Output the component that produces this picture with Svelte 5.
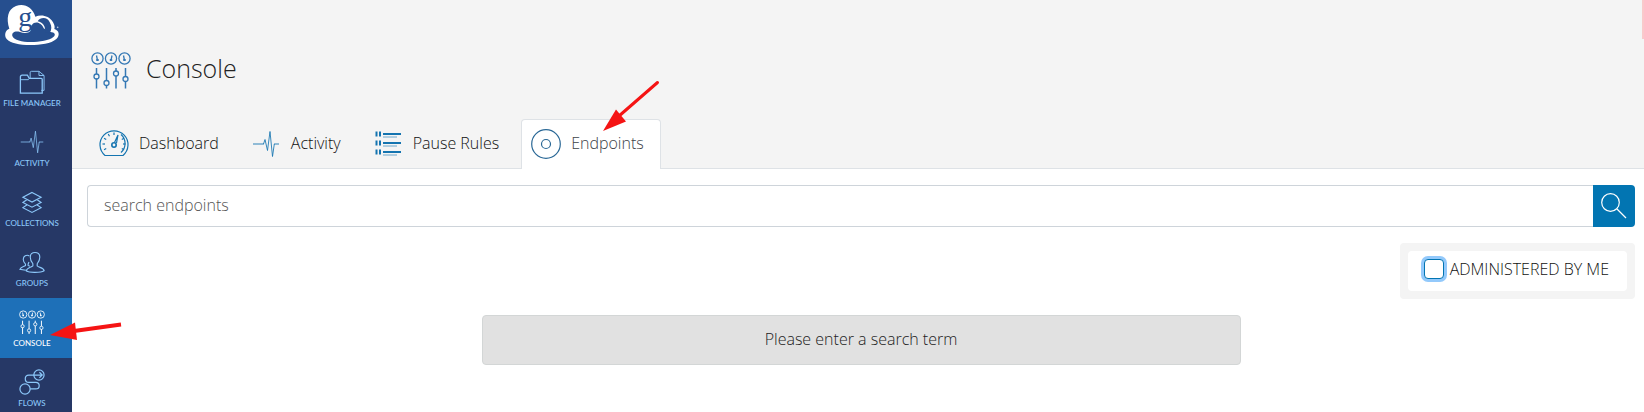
<script>
  const nav = [
    { id: 'files', label: 'FILE MANAGER' },
    { id: 'activity', label: 'ACTIVITY' },
    { id: 'collections', label: 'COLLECTIONS' },
    { id: 'groups', label: 'GROUPS' },
    { id: 'console', label: 'CONSOLE' },
    { id: 'flows', label: 'FLOWS' }
  ];
  const tabs = [
    { id: 'dashboard', label: 'Dashboard' },
    { id: 'pulse', label: 'Activity' },
    { id: 'rules', label: 'Pause Rules' },
    { id: 'endpoints', label: 'Endpoints' }
  ];
  const ticks = [150, 180, 210, 240, 270, 330, 0, 30];
  let term = $state('');
  let mine = $state(false);
</script>

{#snippet consoleIcon()}
  <svg viewBox="0 0 40 38" fill="none" stroke="currentColor" stroke-width="1.3" aria-hidden="true">
    <circle cx="6.500" cy="7.500" r="5.600" /><circle cx="20" cy="7.500" r="5.600" /><circle cx="33.500" cy="7.500" r="5.600" />
    <path d="M5.500 4.500l1 5M21 4.500l-1 5M32.500 4.500l1 5" stroke-width="1.300" />
    <path d="M5.300 9h2.400M18.800 9h2.400M32.300 9h2.400" stroke-width="2" />
    <path d="M5.500 17v6M5.500 27.500v10M15.500 17v12.500M15.500 34.500v3M25 17v3M25 25v12.500M34.500 17v8.500M34.500 30v7.500" stroke-width="1.500" />
    <circle cx="5.500" cy="25.500" r="2.500" /><circle cx="15.500" cy="32" r="2.500" /><circle cx="25" cy="22.500" r="2.500" /><circle cx="34.500" cy="28" r="2.500" />
  </svg>
{/snippet}

{#snippet pulseIcon()}
  <svg viewBox="0 0 30 30" fill="none" stroke="currentColor" aria-hidden="true">
    <path d="M2 15h11" stroke-width="1.500" opacity=".6" /><path d="M23 15h5" stroke-width="1.500" opacity=".6" />
    <path d="M12.500 15l1.500-4.500 2.500 11 2.500-19 2.500 25 1.800-12.500" stroke-width="1" opacity=".85" />
  </svg>
{/snippet}

<div class="app">
  <nav class="side" aria-label="Main">
    <a class="logo" href="#home" aria-label="Home">
      <svg viewBox="0 0 216 174" aria-hidden="true">
        <path fill="#fff" d="M28 86C18 56 23 27 48 18C72 9 98 21 106 50C123 43 147 46 159 67C164 76 165 82 163 87C178 91 180 107 169 117C154 131 121 135 91 135C58 135 31 130 20 117C12 107 15 91 28 86Z" />
        <path fill="#264f8f" d="M37 108C35 97 45 92 60 96C74 101 86 99 92 92C91 74 102 64 116 69C124 72 129 78 131 85L151 96C164 97 169 104 160 111C149 121 119 126 92 126C66 126 42 121 37 108Z" />
        <path fill="#264f8f" d="M113 64C121 51 142 50 150 68C156 79 155 89 149 100L136 96C137 80 128 66 113 64Z" />
        <text x="55" y="77" font-family="Liberation Serif, serif" font-size="84" fill="#264f8f">g</text>
        <circle cx="173" cy="82" r="2.500" fill="#b6c7df" />
      </svg>
    </a>
    {#each nav as item (item.id)}
      <a class="item" class:current={item.id === 'console'} href={'#' + item.id}>
        <span class="glyph">
          {#if item.id === 'files'}
            <svg viewBox="0 0 28 28" fill="none" stroke="currentColor" aria-hidden="true">
              <path d="M1.500 26V8.500q0-2 2-2h5.500l2 3.500h13q1 0 1 1v15z" stroke-width="1.400" />
              <path d="M1.500 11.500h8.500l1.500-1.500M12 10V4q0-1.500 1.500-1.500h8L27 7v16h-3M21.500 2.500V7H27" />
            </svg>
          {:else if item.id === 'activity'}
            {@render pulseIcon()}
          {:else if item.id === 'collections'}
            <svg viewBox="0 0 30 30" fill="none" stroke="currentColor" stroke-width="1.300" aria-hidden="true">
              <path d="M15 4l10.500 5.500L15 15 4.500 9.500zM9 12.500L4.500 15.500l10.500 5.500 10.500-5.500-4.500-3M9 18.500l-4.500 3 10.500 5.500 10.500-5.500-4.500-3" />
            </svg>
          {:else if item.id === 'groups'}
            <svg viewBox="0 0 30 26" fill="none" stroke="currentColor" stroke-width="1.300" aria-hidden="true">
              <path d="M16 15C14 12.500 13 11 13 7.500C13 4 15 2 18.500 2S24 4 24 7.500c0 3-1 5-3 7.500v2.500c2 2 7.500 2 8 5.500C25 25.500 12 25.500 8.500 23.500c0-4 5.500-4 7.500-6z" />
              <path d="M12 6C9 4 4.500 6 5 10.500c0 2 1 3.500 2.500 5v1.500c-2 1.500-5.500 1.500-6.500 4.500l7 1M11.500 13l-1 2.500V17l2 1" />
            </svg>
          {:else if item.id === 'console'}
            {@render consoleIcon()}
          {:else}
            <svg viewBox="0 0 28 28" fill="none" stroke="currentColor" stroke-width="1.300" aria-hidden="true">
              <circle cx="21.500" cy="6.500" r="5.500" /><circle cx="6.500" cy="21.500" r="5.500" />
              <path d="M12 21.500h6c5 0 5-7 0-7h-7.500c-5 0-5-8 0-8H25M22 3.500l3 3-3 3" />
            </svg>
          {/if}
        </span>
        <span>{item.label}</span>
      </a>
    {/each}
  </nav>

  <main>
    <header>
      <div class="title">
        {@render consoleIcon()}
        <h1>Console</h1>
      </div>
      <nav class="tabs" aria-label="Console sections">
        {#each tabs as tab (tab.id)}
          <a class="tab" class:active={tab.id === 'endpoints'} href={'#' + tab.id}>
            {#if tab.id === 'dashboard'}
              <svg viewBox="0 0 30 30" fill="none" stroke="currentColor" stroke-width="1.200" aria-hidden="true">
                <path d="M6 26.500A14 14 0 1 1 24 26.500z" />
                <path d="M22 5.500a12 12 0 0 1 0 18" />
                {#each ticks as angle}
                  <path d="M24 15h2.500" transform={`rotate(${angle} 15 15)`} />
                {/each}
                <circle cx="15" cy="16" r="2.200" stroke-width="1.600" /><path d="M15.500 13.500L19 6l-1.500 8" />
              </svg>
            {:else if tab.id === 'pulse'}
              {@render pulseIcon()}
            {:else if tab.id === 'rules'}
              <svg viewBox="0 0 30 30" fill="none" stroke="currentColor" aria-hidden="true">
                {#each [4, 13, 22] as y}
                  <path d={`M3.500 ${y - 1.5}v5M7 ${y - 1.5}v5`} stroke-width="2" />
                  <path d={`M10 ${y + 1}h18`} stroke-width="2" />
                  <path d={`M10 ${y + 4}h14`} stroke-width="1" opacity=".6" />
                {/each}
              </svg>
            {:else}
              <svg viewBox="0 0 30 30" fill="none" stroke="currentColor" stroke-width="1.200" aria-hidden="true">
                <circle cx="15" cy="15" r="14.300" /><circle cx="15" cy="15" r="4.500" />
              </svg>
            {/if}
            <span>{tab.label}</span>
          </a>
        {/each}
      </nav>
      <div class="edge"></div>
    </header>

    <div class="content">
      <form class="search" role="search" onsubmit={(e) => e.preventDefault()}>
        <input type="text" aria-label="search endpoints" placeholder="search endpoints" bind:value={term} />
        <button type="submit" aria-label="Search">
          <svg viewBox="0 0 26 26" fill="none" stroke="#fff" stroke-width="1.200" aria-hidden="true">
            <circle cx="9.500" cy="9.500" r="8.800" /><path d="M16 16l9 9" stroke-width="1.200" />
          </svg>
        </button>
      </form>
      <div class="filter">
        <label for="mine"><input id="mine" type="checkbox" bind:checked={mine} />ADMINISTERED BY ME</label>
      </div>
      <p class="message">Please enter a search term</p>
    </div>
  </main>

  <svg class="arrow to-tab" viewBox="0 0 58 52" aria-hidden="true">
    <path d="M55.500 2.500L17 36" stroke="#f51414" stroke-width="3" stroke-linecap="round" />
    <path d="M1 51L14 29.500 24 41.500z" fill="#f51414" />
  </svg>
  <svg class="arrow to-nav" viewBox="0 0 73 20" aria-hidden="true">
    <path d="M71 3.500L24 10" stroke="#f51414" stroke-width="4" />
    <path d="M0 14L25 1.500 27 19z" fill="#f51414" />
  </svg>
</div>

<style>
  :global(body) {
    margin: 0;
    background: #fff;
  }
  .app {
    position: relative;
    display: flex;
    height: 100vh;
    overflow: hidden;
    font: 300 16px/24px "Open Sans", sans-serif;
    color: #111;
  }
  .app :global(*) {
    box-sizing: border-box;
  }
  a {
    text-decoration: none;
    color: inherit;
  }
  svg {
    display: block;
    flex: none;
  }
  .side {
    flex: 0 0 72px;
    background: #263866;
  }
  .logo {
    display: block;
    height: 58px;
    background: #264f8f;
  }
  .logo svg {
    width: 72px;
    height: 58px;
    overflow: visible;
  }
  .item {
    display: flex;
    flex-direction: column;
    align-items: center;
    height: 60px;
    padding: 11px 8px 0 0;
    font-family: Lato, sans-serif;
    font-size: 8px;
    font-weight: 500;
    line-height: 10px;
    white-space: nowrap;
    color: #8cc8fa;
  }
  .glyph {
    display: flex;
    align-items: center;
    height: 26px;
    margin-bottom: 3px;
  }
  .glyph svg {
    width: 26px;
    height: 26px;
  }
  .current {
    background: #1e70b8;
    color: #fff;
  }
  main {
    flex: 1;
    min-width: 0;
  }
  header {
    position: relative;
    height: 169px;
    padding: 51px 17px 0;
    background: #f4f4f4;
    border-bottom: 1px solid #dee2e6;
  }
  .edge {
    position: absolute;
    top: 0;
    right: 0;
    width: 2px;
    height: 39px;
    background: #f9c9cb;
  }
  .title {
    display: flex;
    align-items: center;
    gap: 15px;
    height: 38px;
    padding-left: 2px;
    color: #3478b4;
  }
  .title svg {
    width: 40px;
    height: 38px;
  }
  h1 {
    margin: 0 0 4px;
    font-size: 25px;
    font-weight: 300;
    line-height: 34px;
    color: #222;
  }
  .tabs {
    display: flex;
    gap: 5px;
    margin-top: 30px;
  }
  .tab {
    display: flex;
    align-items: center;
    gap: 10px;
    height: 50px;
    padding: 0 16px 2px 9px;
    border: 1px solid transparent;
    border-bottom: 0;
    border-radius: 4px 4px 0 0;
    color: #1474b0;
  }
  .tab svg {
    width: 30px;
    height: 30px;
  }
  .tab span {
    margin-bottom: 2px;
    color: #111;
  }
  .tab.active {
    background: #fff;
    border-color: #dee2e6;
    color: #2a6896;
  }
  .tab.active span {
    color: #3c4248;
  }
  .content {
    display: flex;
    flex-direction: column;
    padding: 16px 9px 0 15px;
  }
  .search {
    display: flex;
    height: 42px;
  }
  .search input {
    flex: 1;
    min-width: 0;
    padding: 0 16px 2px;
    border: 1px solid #ced4da;
    border-right: 0;
    border-radius: 4px 0 0 4px;
    background: #fff;
    font: inherit;
    color: #222;
    outline: 0;
  }
  .search input::placeholder {
    color: #555;
    opacity: 1;
  }
  .search button {
    display: grid;
    place-items: center;
    width: 42px;
    padding: 0;
    border: 0;
    border-radius: 0 4px 4px 0;
    background: #0275b2;
  }
  .search button svg {
    width: 26px;
    height: 26px;
  }
  .filter {
    align-self: flex-end;
    margin-top: 16px;
    padding: 8px;
    border-radius: 4px;
    background: #f4f4f4;
  }
  .filter label {
    display: flex;
    align-items: center;
    gap: 6px;
    height: 40px;
    padding: 0 18px 4px 16px;
    border-radius: 4px;
    background: #fff;
  }
  .filter input {
    appearance: none;
    width: 20px;
    height: 20px;
    margin: 0;
    border: 1px solid #0275b2;
    border-radius: 4px;
    background: #fff;
    box-shadow: 0 0 0 3px #93c9fb;
  }
  .filter input:checked {
    background: #0275b2;
  }
  .message {
    align-self: center;
    width: calc(50% - 15px);
    margin: 16px 0 0;
    padding: 11px 16px 13px;
    border: 1px solid #d3d6d6;
    border-radius: 4px;
    background: #e1e1e1;
    text-align: center;
    color: #222;
  }
  .arrow {
    position: absolute;
    pointer-events: none;
  }
  .to-tab {
    left: 602px;
    top: 80px;
    width: 58px;
    height: 52px;
  }
  .to-nav {
    left: 50px;
    top: 321px;
    width: 73px;
    height: 20px;
  }
</style>
